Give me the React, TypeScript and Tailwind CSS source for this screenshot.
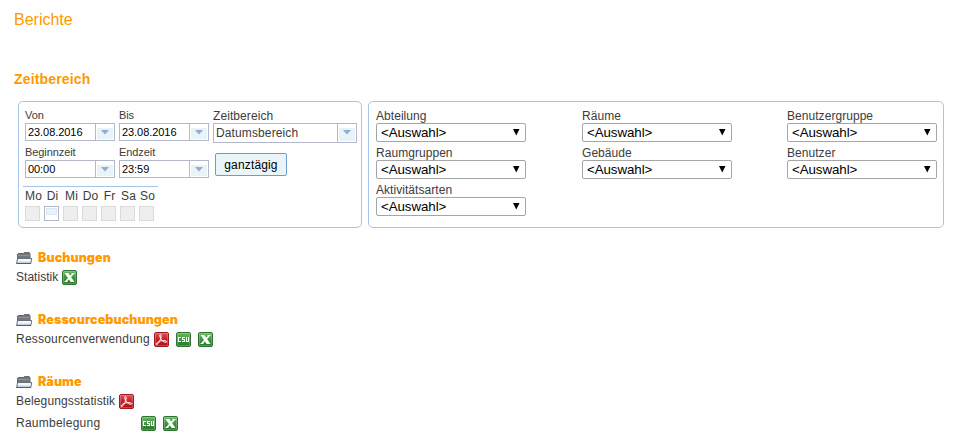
import type { ReactNode } from 'react'

type FileKind = 'pdf' | 'csv' | 'xls'

const weekdays = [
  { label: 'Mo', active: false },
  { label: 'Di', active: true },
  { label: 'Mi', active: false },
  { label: 'Do', active: false },
  { label: 'Fr', active: false },
  { label: 'Sa', active: false },
  { label: 'So', active: false },
]

const filterColumns = [
  ['Abteilung', 'Raumgruppen', 'Aktivitätsarten'],
  ['Räume', 'Gebäude'],
  ['Benutzergruppe', 'Benutzer'],
]

// ─── Icons ───────────────────────────────────────────────────────────────────
function FolderIcon() {
  return (
    <svg width="17" height="13" viewBox="0 0 17 13" className="block shrink-0">
      <path d="M1.500 8V2.300L2.300 1.500h5l1-.9h4.700l1 .9V8z" fill="#74777c" stroke="#62666b" />
      <path d="M2 3.500h11.500" stroke="#8f9398" />
      <path d="M1.600 6.500h14.100l-.9 5H.6z" fill="#c3d2e0" stroke="#687079" />
      <path d="M2.200 7h12.800l-.4 2.500H1.700z" fill="#f4f9fd" />
      <path d="M.5 11.500h14.300" stroke="#565d65" />
    </svg>
  )
}

function FileIcon({ kind }: { kind: FileKind }) {
  const red = kind === 'pdf'
  return (
    <svg width="15" height="15" viewBox="0 0 15 15" className="block shrink-0">
      <defs>
        <linearGradient id={`fill-${kind}`} x1="0" y1="0" x2="0" y2="1">
          <stop offset="0" stopColor={red ? '#e0565a' : '#71b768'} />
          <stop offset=".5" stopColor={red ? '#c91f25' : '#3f9440'} />
          <stop offset="1" stopColor={red ? '#a90f15' : '#26752b'} />
        </linearGradient>
      </defs>
      <rect x=".5" y=".5" width="14" height="14" rx="1.5" fill={`url(#fill-${kind})`} stroke={red ? '#a3191e' : '#2c742f'} />
      <rect x="1.5" y="1.5" width="12" height="12" fill="none" stroke="#fff" strokeOpacity=".22" />
      {kind === 'pdf' && (
        <path
          d="M6 2.500c1.500-.4 1.300 2.100.6 4.200C5.800 9 4.200 12.200 2.800 12.500c-1.300.2-.7-1.900 2.600-3.100 2.800-1 7-1.100 7.300.2.200 1.200-2.800.8-4.700-1.200C6.500 6.800 5 2.900 6 2.500z"
          fill="none"
          stroke="#fff"
          strokeWidth="1"
        />
      )}
      {kind === 'csv' && (
        <g fill="none" stroke="#fff" strokeWidth="1.1">
          <path d="M5 5.500H2.500v4H5" />
          <path d="M9 5.500H6.500v2h2v2H6" />
          <path d="M10.500 5v4.500h2V5" />
        </g>
      )}
      {kind === 'xls' && (
        <>
          <path d="M2.500 3h3.800l6.200 9H8.700z" fill="#fff" />
          <path d="M11.300 3.500 3.800 11.500" stroke="#fff" strokeWidth="1.700" />
          <path d="M9.500 3.500h3M2.500 11.500h3" stroke="#fff" />
        </>
      )}
    </svg>
  )
}

// ─── Form controls ───────────────────────────────────────────────────────────
function Trigger() {
  return (
    <span className="flex h-full w-[19px] shrink-0 border-l border-[#b3b8ca] p-px pt-[4px]">
      <span className="flex flex-1 justify-center bg-[#e8f3f8] pt-[2px]">
        <svg width="8" height="5" viewBox="0 0 8 5">
          <path d="M0 0h8L4 4.500z" fill="#94abcf" />
        </svg>
      </span>
    </span>
  )
}

function ComboField({ label, value }: { label: string; value: string }) {
  return (
    <div className="h-[37px] w-[90px]">
      <div className="h-[15px] text-[11px] leading-[15px] tracking-[-0.080px]">{label}</div>
      <div className="flex h-[18px] border border-[#b3b8ca] bg-white text-[11px] leading-[16px] text-black">
        <span className="flex-1 pl-[2px] tracking-[-0.060px]">{value}</span>
        <Trigger />
      </div>
    </div>
  )
}

function FilterSelect({ label }: { label: string }) {
  return (
    <div className="h-[37px] w-[150px]">
      <div className="h-[15px] pt-px text-[12px] leading-[14px] tracking-[0.050px]">{label}</div>
      <div className="flex h-[19px] items-start justify-between rounded-[2px] border border-[#a6a6a6] bg-white pr-[5px] pl-[4px] text-[13.333px] leading-[18px] tracking-[-0.080px] text-black">
        <span>&lt;Auswahl&gt;</span>
        <svg width="8" height="7" viewBox="0 0 8 7" className="mt-[5px]">
          <path d="M1 0h6.500L4.250 6.500z" fill="#000" />
        </svg>
      </div>
    </div>
  )
}

function Panel({ className, children }: { className: string; children: ReactNode }) {
  return <div className={`h-[127px] rounded-[5px] border border-[#a6c5e9] ${className}`}>{children}</div>
}

// ─── Report list ─────────────────────────────────────────────────────────────
function SectionTitle({ children }: { children: ReactNode }) {
  return (
    <div className="flex h-[16px] items-center gap-[5px]">
      <FolderIcon />
      <h2 className="font-[Inter,sans-serif] text-[12.500px] leading-[16px] font-black tracking-[0.080px] text-[#ff9900]">{children}</h2>
    </div>
  )
}

function ReportRow({ label, labelWidth, files }: { label: string; labelWidth: string; files: FileKind[] }) {
  return (
    <div className="flex h-[22px] items-center">
      <span className={`${labelWidth} text-[12px] whitespace-nowrap`}>{label}</span>
      <span className="flex gap-[7px]">
        {files.map(kind => <FileIcon key={kind} kind={kind} />)}
      </span>
    </div>
  )
}

export default function App() {
  return (
    <main className="h-[441px] w-[962px] overflow-hidden bg-[#fefefe] font-['Liberation_Sans',Arial,sans-serif] text-[#3c3c3c]">
      <h1 className="pt-[10px] pl-[14px] text-[16px] leading-[20px] text-[#ff9900]">Berichte</h1>
      <h2 className="mt-[40px] pl-[14px] text-[14px] leading-[18px] font-bold tracking-[0.150px] text-[#ff9900]">Zeitbereich</h2>

      <div className="mt-[13px] ml-[18px] flex gap-[6px]">
        <Panel className="w-[344px] pt-[6px] pl-[4px]">
          <div className="flex gap-[4px] pl-[2px]">
            <div className="w-[184px]">
              <div className="flex gap-[4px]">
                <ComboField label="Von" value="23.08.2016" />
                <ComboField label="Bis" value="23.08.2016" />
              </div>
              <div className="flex gap-[4px]">
                <ComboField label="Beginnzeit" value="00:00" />
                <ComboField label="Endzeit" value="23:59" />
              </div>
            </div>
            <div>
              <div className="h-[15px] pt-px text-[12px] leading-[14px] tracking-[0.080px]">Zeitbereich</div>
              <div className="flex h-[20px] w-[144px] border border-[#b3b8ca] bg-white text-[12px] leading-[18px]">
                <span className="flex-1 pl-[2px] tracking-[0.120px]">Datumsbereich</span>
                <Trigger />
              </div>
              <button className="mt-[10px] ml-[2px] block h-[23px] w-[72px] rounded-[2px] border border-[#6d9dcb] bg-[#eaf5f9] text-[12px] leading-[20px] tracking-[0.150px] text-black">
                ganztägig
              </button>
            </div>
          </div>
          <div className="mt-[4px] flex w-[135px] border-t border-[#a6c5e9] pt-[2px] pl-[2px]">
            {weekdays.map(({ label, active }) => (
              <div key={label} className="w-[19px] shrink-0">
                <div className="h-[17px] w-[17px] text-center text-[12px] leading-[15px] tracking-[0.100px]">{label}</div>
                <div className={`h-[15px] w-[15px] border ${active ? 'border-[#b3b8ca] bg-white p-px' : 'border-[#dadada] bg-[#eeeeee]'}`}>
                  {active && <div className="h-[7px] border border-[#dce8f1] bg-[#e8f3f8]" />}
                </div>
              </div>
            ))}
          </div>
        </Panel>

        <Panel className="flex w-[576px] gap-[56px] pt-[6px] pl-[7px]">
          {filterColumns.map((labels, i) => (
            <div key={labels[0]} className={i === 2 ? '-ml-px' : ''}>
              {labels.map(label => <FilterSelect key={label} label={label} />)}
            </div>
          ))}
        </Panel>
      </div>

      <section className="mt-[22px] ml-[16px]">
        <SectionTitle>Buchungen</SectionTitle>
        <ReportRow label="Statistik" labelWidth="w-[46px] tracking-[0.030px]" files={['xls']} />
      </section>
      <section className="mt-[24px] ml-[16px]">
        <SectionTitle>Ressourcebuchungen</SectionTitle>
        <ReportRow label="Ressourcenverwendung" labelWidth="w-[138px] tracking-[0.220px]" files={['pdf', 'csv', 'xls']} />
      </section>
      <section className="mt-[24px] ml-[16px]">
        <SectionTitle>Räume</SectionTitle>
        <ReportRow label="Belegungsstatistik" labelWidth="w-[103px] tracking-[0.140px]" files={['pdf']} />
        <ReportRow label="Raumbelegung" labelWidth="w-[125px] tracking-[0.250px]" files={['csv', 'xls']} />
      </section>
    </main>
  )
}
